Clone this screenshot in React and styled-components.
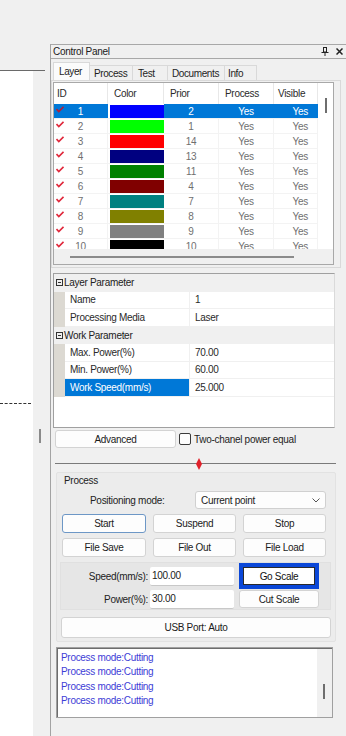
import React from 'react'
import styled, { createGlobalStyle } from 'styled-components'

const GlobalStyle = createGlobalStyle`
  html, body { margin: 0; padding: 0; background: #f0f0f0; }
  body {
    font-family: "Liberation Sans", Arial, sans-serif;
    font-size: 10px;
    letter-spacing: -0.3px;
    color: #1e1e1e;
  }
  * { box-sizing: border-box; }
`

const Screen = styled.div`
  width: 346px;
  height: 736px;
  display: flex;
  overflow: hidden;
  background: #f0f0f0;
`

/* left drawing area */
const Workspace = styled.div`
  width: 50px;
  display: flex;
  flex-direction: column;
`
const WorkspaceTop = styled.div`
  height: 70px;
`
const Ruler = styled.div`
  width: 45px;
  height: 1px;
  background: #6a6a6a;
`
const WorkspaceBody = styled.div`
  flex: 1;
  display: flex;
`
const Canvas = styled.div`
  width: 33px;
  background: #fff;
  padding-top: 332px;
`
const DashLine = styled.div`
  width: 31px;
  border-top: 1px dashed #333;
`
const Gutter = styled.div`
  flex: 1;
  padding: 358px 0 0 6px;
`
const Grip = styled.div`
  width: 2px;
  height: 14px;
  background: #8a8a8a;
`

/* control panel */
const Panel = styled.div`
  width: 296px;
  flex-shrink: 0;
  margin-top: 44px;
  display: flex;
  flex-direction: column;
  border-left: 1px solid #a3a3a3;
`
const TitleBar = styled.div`
  height: 15px;
  display: flex;
  align-items: center;
  justify-content: space-between;
  border-top: 1px solid #a8a8a8;
  border-bottom: 1px solid #a8a8a8;
  padding: 0 3px 0 2px;
  color: #202020;
`
const TitleIcons = styled.div`
  display: flex;
  align-items: center;
  gap: 7px;
`
const Body = styled.div`
  width: 290px;
  display: flex;
  flex-direction: column;
  padding-top: 3px;
`
const TabStrip = styled.div`
  display: flex;
  align-items: flex-end;
  height: 18px;
  padding-left: 2px;
`
const Tab = styled.div`
  height: ${p => (p.$active ? 18 : 15)}px;
  width: ${p => p.$w}px;
  padding-left: ${p => p.$pl}px;
  border: 1px solid #d9d9d9;
  border-bottom: none;
  margin-right: -1px;
  background: ${p => (p.$active ? '#fbfbfb' : '#f0f0f0')};
  display: flex;
  align-items: center;
  white-space: nowrap;
  letter-spacing: -0.4px;
  color: #1e1e1e;
`
const TabPage = styled.div`
  height: 188px;
  border: 1px solid #d9d9d9;
  padding: 1px 0 0 1px;
`

/* layer list */
const ListBox = styled.div`
  width: 281px;
  height: 183px;
  border: 1px solid #a8a8a8;
  background: #fff;
  display: flex;
  flex-direction: column;
`
const ListMain = styled.div`
  height: 166px;
  display: flex;
`
const Table = styled.div`
  width: 264px;
  overflow: hidden;
`
const HeaderRow = styled.div`
  display: grid;
  grid-template-columns: 54px 56px 55px 55px 44px;
  height: 21px;
`
const HeadCell = styled.div`
  padding-left: ${p => p.$pl || 6}px;
  display: flex;
  align-items: center;
  border-right: 1px solid #e8e8e8;
  color: #2a2a2a;
`
const Row = styled.div`
  display: grid;
  grid-template-columns: 54px 56px 55px 55px 44px;
  height: 15px;
  background: ${p => (p.$selected ? '#0078d7' : '#fff')};
  color: ${p => (p.$selected ? '#fff' : '#6f6f6f')};
  border-bottom: 1px solid #f3f3f3;
`
const Cell = styled.div`
  position: relative;
  display: flex;
  align-items: center;
  justify-content: ${p => p.$align || 'center'};
  padding-right: ${p => p.$pr || 0}px;
  border-right: 1px solid ${p => (p.$selected ? '#0078d7' : '#f3f3f3')};
`
const CheckMark = styled.svg`
  position: absolute;
  left: 2px;
  top: 2px;
`
const SwatchCell = styled.div`
  padding: 1px 0 0 2px;
  background: #fff;
`
const Swatch = styled.div`
  height: 13px;
  background: ${p => p.$color};
`
const VScroll = styled.div`
  width: 15px;
  padding: 15px 0 0 7px;
`
const Thumb = styled.div`
  width: 2px;
  height: ${p => p.$h}px;
  background: #6e6e6e;
`
const HScroll = styled.div`
  flex: 1;
  background: #f0f0f0;
  padding: 7px 0 0 16px;
`
const HThumb = styled.div`
  width: 224px;
  height: 2px;
  background: #8b8b8b;
`

/* property grid */
const PropGrid = styled.div`
  margin: 5px 0 0 2px;
  width: 282px;
  height: 155px;
  border: 1px solid #a0a0a0;
  border-right-color: #dadada;
  background: #fff;
`
const Category = styled.div`
  height: 17.5px;
  display: flex;
  align-items: center;
  gap: 1px;
  padding-left: 2px;
  background: #f0f0f0;
  color: #222;
`
const Collapse = styled.div`
  width: 7px;
  height: 7px;
  border: 1px solid #333;
  display: flex;
  align-items: center;
  justify-content: center;
  &::after {
    content: '';
    width: 3px;
    height: 1px;
    background: #333;
  }
`
const PropRow = styled.div`
  height: 17.5px;
  display: flex;
`
const PropGutter = styled.div`
  width: 11px;
  background: #dcd9d2;
`
const PropName = styled.div`
  width: 125px;
  display: flex;
  align-items: center;
  padding-left: 5px;
  background: ${p => (p.$selected ? '#0078d7' : '#fff')};
  color: ${p => (p.$selected ? '#fff' : '#2a2a2a')};
  border-right: 1px solid #f0f0f0;
  border-bottom: 1px solid #f0f0f0;
`
const PropValue = styled.div`
  flex: 1;
  display: flex;
  align-items: center;
  padding-left: 5px;
  color: #2a2a2a;
  border-bottom: 1px solid #f0f0f0;
`

/* buttons & controls */
const AdvancedRow = styled.div`
  margin: 2px 0 0 4px;
  height: 18px;
  display: flex;
  align-items: center;
`
const Button = styled.div`
  width: ${p => (p.$w ? `${p.$w}px` : 'auto')};
  height: ${p => p.$h || 19}px;
  display: flex;
  align-items: center;
  justify-content: center;
  background: #fdfdfd;
  border: 1px solid ${p => (p.$focus ? '#6d97c6' : '#d3d3d3')};
  border-radius: 3px;
  color: #1b1b1b;
`
const CheckBox = styled.div`
  width: 12px;
  height: 12px;
  margin: 0 3px 0 3px;
  border: 1px solid #3a3a3a;
  border-radius: 2px;
  background: #fdfdfd;
`
const Splitter = styled.div`
  margin: 9px 0 0 4px;
  width: 281px;
  height: 13px;
  display: flex;
  align-items: center;
  background: linear-gradient(#7a7a7a, #7a7a7a) 0 6px / 100% 1px no-repeat;
  padding-left: 141px;
`
const Group = styled.div`
  margin: 2px 0 0 5px;
  width: 280px;
  height: 170px;
  background: #ececec;
  border: 1px solid #e2e2e2;
  border-radius: 2px;
  display: flex;
  flex-direction: column;
`
const GroupTitle = styled.div`
  padding: 2px 0 0 7px;
  height: 14px;
  line-height: 12px;
  color: #222;
`
const PositionRow = styled.div`
  margin-top: 4px;
  height: 18px;
  display: flex;
  align-items: center;
  padding-left: 33px;
`
const PositionLabel = styled.div`
  width: 105px;
  color: #222;
`
const Combo = styled.div`
  width: 131px;
  height: 18px;
  background: #fdfdfd;
  border: 1px solid #d0d0d0;
  border-radius: 3px;
  display: flex;
  align-items: center;
  justify-content: space-between;
  padding: 0 5px 0 5px;
  color: #1b1b1b;
`
const ButtonGrid = styled.div`
  margin: 5px 0 0 5px;
  display: grid;
  grid-template-columns: 84px 83px 83px;
  grid-auto-rows: 19px;
  gap: 5px 7px;
`
const SpeedBox = styled.div`
  margin: 5px 0 0 3px;
  width: 271px;
  height: 48px;
  background: #e6e6e6;
  border: 1px solid #e0e0e0;
  display: grid;
  grid-template-columns: 89px 84px 85px;
  grid-template-rows: 26px 20px;
  align-items: center;
`
const FieldLabel = styled.div`
  text-align: right;
  padding-right: 2px;
  color: #222;
`
const Field = styled.div`
  width: 84px;
  height: 19px;
  background: #fff;
  border-bottom: 1px solid #c8c8c8;
  border-radius: 2px;
  display: flex;
  align-items: center;
  padding-left: 2px;
  color: #1b1b1b;
`
const ScaleCell = styled.div`
  padding-left: 5px;
  display: flex;
  align-items: center;
`
const GoScale = styled.div`
  width: 85px;
  height: 26px;
  border: 4px solid #0a47d8;
  display: flex;
  align-items: stretch;
`
const GoScaleInner = styled.div`
  flex: 1;
  background: #fff;
  border: 1px solid #2a2a2a;
  display: flex;
  align-items: center;
  justify-content: center;
  color: #111;
`
const UsbRow = styled.div`
  margin: 7px 0 0 4px;
  width: 270px;
`
const LogBox = styled.div`
  margin: 5px 0 0 5px;
  width: 277px;
  height: 71px;
  border: 1px solid #a0a0a0;
  display: flex;
  background: #fff;
`
const LogText = styled.div`
  flex: 1;
  border-top: 1px solid #6d6d6d;
  border-left: 1px solid #6d6d6d;
  padding: 2px 0 0 3px;
  line-height: 14.3px;
  color: #3d3dd6;
`
const LogScroll = styled.div`
  width: 15px;
  background: #f0f0f0;
  border-top: 1px solid #6d6d6d;
  padding: 35px 0 0 6px;
`

const layers = [
  { id: 1, color: '#0000ff', prior: 2 },
  { id: 2, color: '#00ff00', prior: 1 },
  { id: 3, color: '#ff0000', prior: 14 },
  { id: 4, color: '#000080', prior: 13 },
  { id: 5, color: '#008000', prior: 11 },
  { id: 6, color: '#800000', prior: 4 },
  { id: 7, color: '#008080', prior: 7 },
  { id: 8, color: '#808000', prior: 8 },
  { id: 9, color: '#808080', prior: 9 },
  { id: 10, color: '#000000', prior: 10 },
]

const tabs = [
  { label: 'Layer', w: 37, pl: 5, active: true },
  { label: 'Process', w: 44, pl: 4 },
  { label: 'Test', w: 36, pl: 5 },
  { label: 'Documents', w: 58, pl: 4 },
  { label: 'Info', w: 33, pl: 3 },
]

const Check = ({ dark }) => (
  <CheckMark width="8" height="7" viewBox="0 0 8 7">
    <polyline points="0.5,3 2.8,5.6 7.5,0.8" fill="none" stroke={dark ? '#b0203c' : '#e0283c'} strokeWidth="1.6" />
  </CheckMark>
)

const App = () => {
  return (
    <Screen>
      <GlobalStyle />
      <Workspace>
        <WorkspaceTop />
        <Ruler />
        <WorkspaceBody>
          <Canvas>
            <DashLine />
          </Canvas>
          <Gutter>
            <Grip />
          </Gutter>
        </WorkspaceBody>
      </Workspace>

      <Panel>
        <TitleBar>
          <span>Control Panel</span>
          <TitleIcons>
            <svg width="8" height="9" viewBox="0 0 8 9">
              <rect x="2.5" y="0.5" width="3" height="4.5" fill="none" stroke="#222" />
              <line x1="0.5" y1="5.5" x2="7.5" y2="5.5" stroke="#222" />
              <line x1="4" y1="5.5" x2="4" y2="9" stroke="#222" />
            </svg>
            <svg width="7" height="7" viewBox="0 0 7 7">
              <path d="M0.5 0.5 L6.5 6.5 M6.5 0.5 L0.5 6.5" stroke="#222" strokeWidth="1.5" />
            </svg>
          </TitleIcons>
        </TitleBar>

        <Body>
          <TabStrip>
            {tabs.map(t => (
              <Tab key={t.label} $w={t.w} $pl={t.pl} $active={t.active}>{t.label}</Tab>
            ))}
          </TabStrip>
          <TabPage>
            <ListBox>
              <ListMain>
                <Table>
                  <HeaderRow>
                    <HeadCell $pl={3}>ID</HeadCell>
                    <HeadCell>Color</HeadCell>
                    <HeadCell>Prior</HeadCell>
                    <HeadCell>Process</HeadCell>
                    <HeadCell $pl={4}>Visible</HeadCell>
                  </HeaderRow>
                  {layers.map((l, i) => {
                    const sel = i === 0
                    return (
                      <Row key={l.id} $selected={sel}>
                        <Cell $selected={sel}>
                          <Check dark={sel} />
                          {l.id}
                        </Cell>
                        <SwatchCell>
                          <Swatch $color={l.color} />
                        </SwatchCell>
                        <Cell $selected={sel}>{l.prior}</Cell>
                        <Cell $selected={sel}>Yes</Cell>
                        <Cell $selected={sel} $align="flex-end" $pr={9}>Yes</Cell>
                      </Row>
                    )
                  })}
                </Table>
                <VScroll>
                  <Thumb $h={15} />
                </VScroll>
              </ListMain>
              <HScroll>
                <HThumb />
              </HScroll>
            </ListBox>
          </TabPage>

          <PropGrid>
            <Category><Collapse />Layer Parameter</Category>
            <PropRow><PropGutter /><PropName>Name</PropName><PropValue>1</PropValue></PropRow>
            <PropRow><PropGutter /><PropName>Processing Media</PropName><PropValue>Laser</PropValue></PropRow>
            <Category><Collapse />Work Parameter</Category>
            <PropRow><PropGutter /><PropName>Max. Power(%)</PropName><PropValue>70.00</PropValue></PropRow>
            <PropRow><PropGutter /><PropName>Min. Power(%)</PropName><PropValue>60.00</PropValue></PropRow>
            <PropRow><PropGutter /><PropName $selected>Work Speed(mm/s)</PropName><PropValue>25.000</PropValue></PropRow>
          </PropGrid>

          <AdvancedRow>
            <Button $w={121} $h={18}>Advanced</Button>
            <CheckBox />
            <span>Two-chanel power equal</span>
          </AdvancedRow>

          <Splitter>
            <svg width="6" height="12" viewBox="0 0 6 12">
              <path d="M3 0 L6 6 L3 12 L0 6 Z" fill="#e0202a" />
            </svg>
          </Splitter>

          <Group>
            <GroupTitle>Process</GroupTitle>
            <PositionRow>
              <PositionLabel>Positioning mode:</PositionLabel>
              <Combo>
                <span>Current point</span>
                <svg width="8" height="5" viewBox="0 0 8 5">
                  <polyline points="0.5,0.5 4,4 7.5,0.5" fill="none" stroke="#555" />
                </svg>
              </Combo>
            </PositionRow>
            <ButtonGrid>
              <Button $focus>Start</Button>
              <Button>Suspend</Button>
              <Button>Stop</Button>
              <Button>File Save</Button>
              <Button>File Out</Button>
              <Button>File Load</Button>
            </ButtonGrid>
            <SpeedBox>
              <FieldLabel>Speed(mm/s):</FieldLabel>
              <Field>100.00</Field>
              <ScaleCell>
                <GoScale><GoScaleInner>Go Scale</GoScaleInner></GoScale>
              </ScaleCell>
              <FieldLabel>Power(%):</FieldLabel>
              <Field>30.00</Field>
              <ScaleCell>
                <Button $w={84} $h={18}>Cut Scale</Button>
              </ScaleCell>
            </SpeedBox>
            <UsbRow>
              <Button $h={21}>USB Port: Auto</Button>
            </UsbRow>
          </Group>

          <LogBox>
            <LogText>
              <div>Process mode:Cutting</div>
              <div>Process mode:Cutting</div>
              <div>Process mode:Cutting</div>
              <div>Process mode:Cutting</div>
            </LogText>
            <LogScroll>
              <Thumb $h={15} />
            </LogScroll>
          </LogBox>
        </Body>
      </Panel>
    </Screen>
  )
}

export default App
